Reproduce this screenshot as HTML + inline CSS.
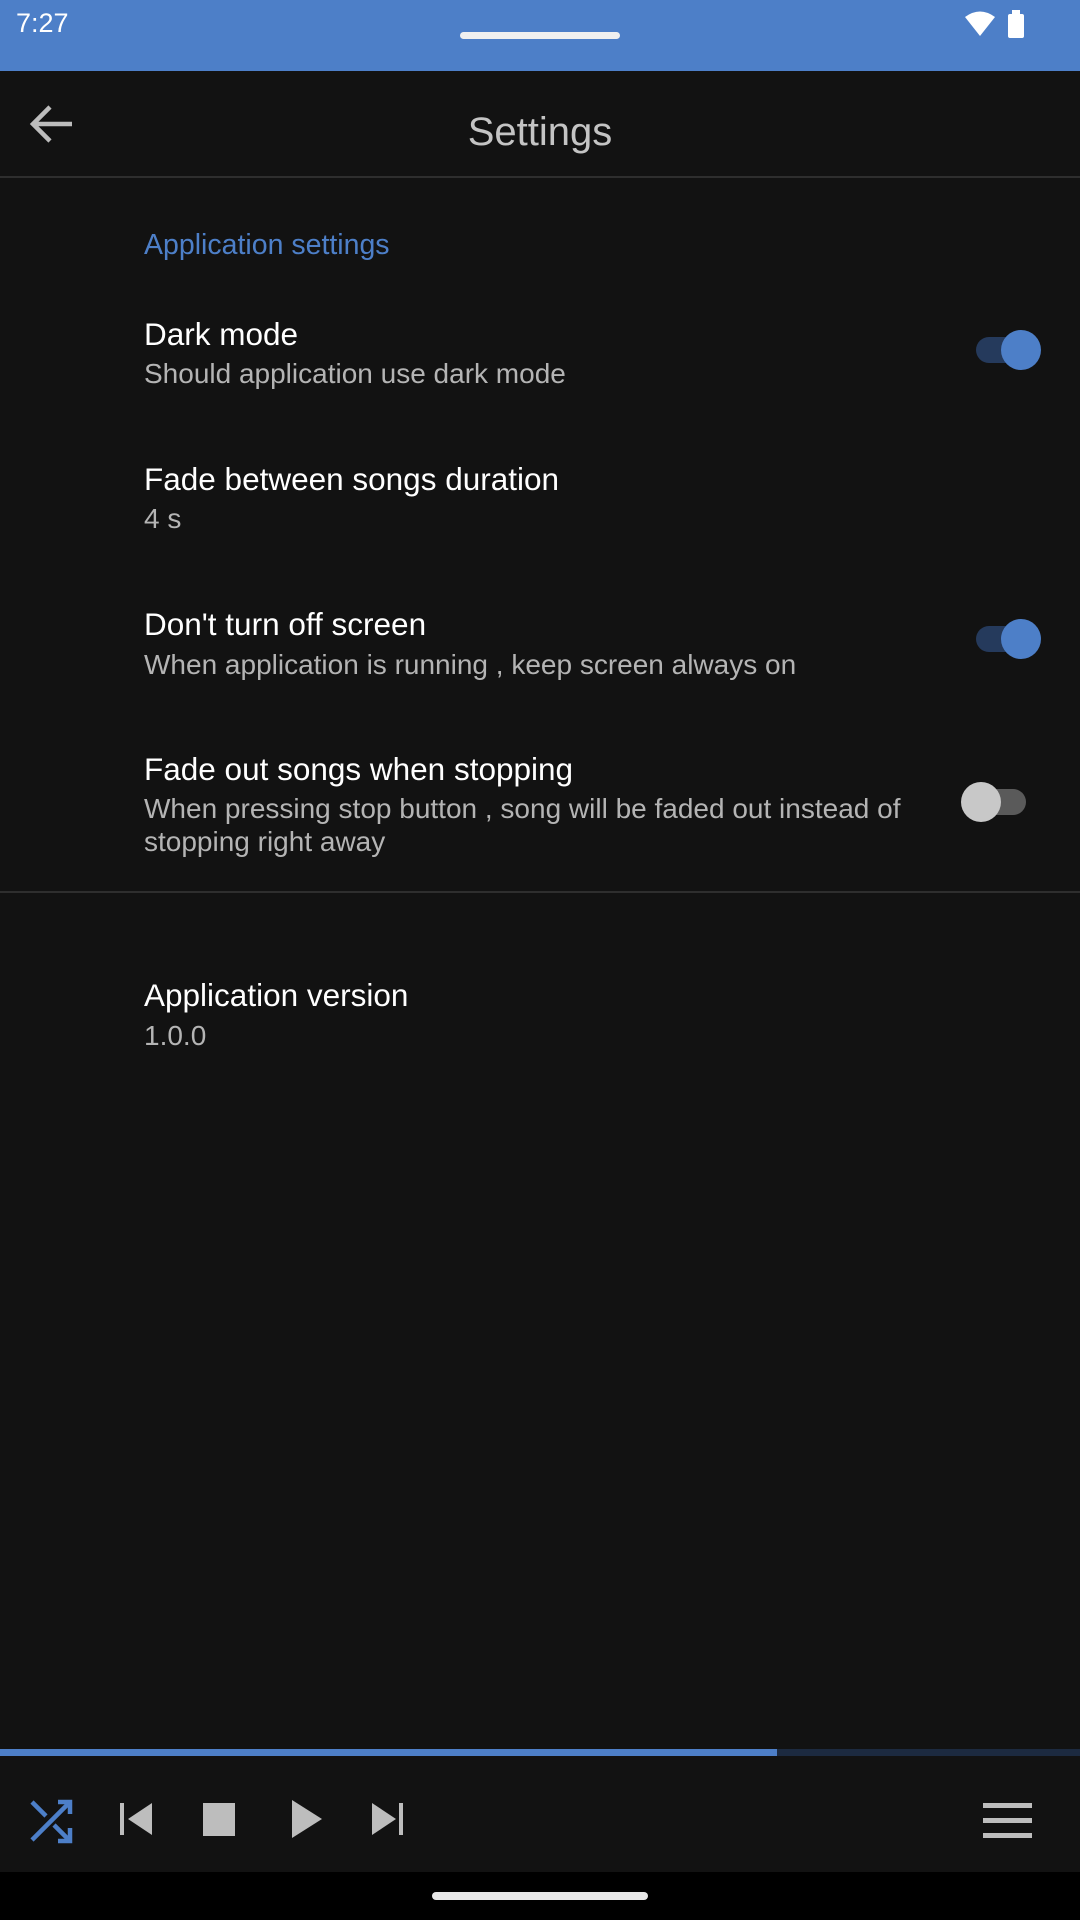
<!DOCTYPE html>
<html><head><meta charset="utf-8"><style>
*{margin:0;padding:0;box-sizing:border-box}
body{width:1080px;height:1920px;background:#121212;font-family:"Liberation Sans",sans-serif;position:relative;overflow:hidden}
.a{position:absolute;white-space:nowrap}
.t{color:#fff;font-size:31.5px;line-height:34px;left:144px}
.s{color:#b4b4b4;font-size:28px;line-height:32px;left:144px}
.track{position:absolute;width:64px;height:26px;border-radius:13px}
.thumb{position:absolute;width:40px;height:40px;border-radius:50%}
</style></head><body>
<div class="a" style="left:0;top:0;width:1080px;height:71px;background:#4d7fc8"></div>
<div class="a" style="left:16px;top:8px;color:#fff;font-size:27px;line-height:30px">7:27</div>
<div class="a" style="left:460px;top:32px;width:160px;height:7px;border-radius:4px;background:#f0f0f0"></div>
<svg class="a" style="left:964px;top:10px" width="32" height="28" viewBox="0 0 32 28"><path d="M16 26 L1 7 Q16 -4 31 7 Z" fill="#fff"/></svg>
<div class="a" style="left:1008px;top:14px;width:16px;height:24px;background:#fff;border-radius:2px"></div>
<div class="a" style="left:1012px;top:10px;width:8px;height:5px;background:#fff"></div>
<svg class="a" style="left:28px;top:102px" width="48" height="44" viewBox="0 0 48 44"><path d="M44 22 H6 M22 5 L5 22 L22 39" stroke="#bdbdbd" stroke-width="4.5" fill="none"/></svg>
<div class="a" style="left:0;width:1080px;text-align:center;top:112px;color:#c4c4c4;font-size:40px;line-height:40px">Settings</div>
<div class="a" style="left:0;top:176px;width:1080px;height:2px;background:#2e2e2e"></div>
<div class="a" style="left:144px;top:230px;color:#4d7fc8;font-size:28.5px;line-height:30px">Application settings</div>

<div class="a t" style="top:317px">Dark mode</div>
<div class="a s" style="top:358px">Should application use dark mode</div>
<div class="track" style="left:976px;top:337px;background:#253a5c"></div>
<div class="thumb" style="left:1001px;top:330px;background:#4d7fc8"></div>

<div class="a t" style="top:462px">Fade between songs duration</div>
<div class="a s" style="top:503px">4 s</div>

<div class="a t" style="top:607px">Don't turn off screen</div>
<div class="a s" style="top:649px">When application is running , keep screen always on</div>
<div class="track" style="left:976px;top:626px;background:#253a5c"></div>
<div class="thumb" style="left:1001px;top:619px;background:#4d7fc8"></div>

<div class="a t" style="top:752px">Fade out songs when stopping</div>
<div class="a s" style="top:793px">When pressing stop button , song will be faded out instead of</div>
<div class="a s" style="top:826px">stopping right away</div>
<div class="track" style="left:962px;top:789px;background:#5a5a5a"></div>
<div class="thumb" style="left:961px;top:782px;background:#c8c8c8"></div>

<div class="a" style="left:0;top:891px;width:1080px;height:2px;background:#2e2e2e"></div>
<div class="a t" style="top:978px">Application version</div>
<div class="a s" style="top:1020px">1.0.0</div>

<div class="a" style="left:0;top:1749px;width:1080px;height:7px;background:#1c2a40"></div>
<div class="a" style="left:0;top:1749px;width:777px;height:7px;background:#4d7fc8"></div>

<svg class="a" style="left:28px;top:1798px" width="48" height="46" viewBox="0 0 48 46"><g stroke="#4d7fc8" stroke-width="4.5" fill="none"><path d="M4 4 L18 18 M26 27 L42 43 M4 42 L42 4"/><path d="M30 4 H42 V16 M42 30 V43 H30"/></g></svg>
<svg class="a" style="left:118px;top:1801px" width="36" height="36" viewBox="0 0 36 36"><rect x="2" y="2" width="4" height="32" fill="#bdbdbd"/><path d="M34 2 V34 L10 18 Z" fill="#bdbdbd"/></svg>
<div class="a" style="left:203px;top:1803px;width:32px;height:33px;background:#bdbdbd"></div>
<svg class="a" style="left:290px;top:1798px" width="34" height="42" viewBox="0 0 34 42"><path d="M2 2 L32 21 L2 40 Z" fill="#bdbdbd"/></svg>
<svg class="a" style="left:370px;top:1801px" width="36" height="36" viewBox="0 0 36 36"><path d="M2 2 V34 L26 18 Z" fill="#bdbdbd"/><rect x="29" y="2" width="4" height="32" fill="#bdbdbd"/></svg>
<div class="a" style="left:983px;top:1803px;width:49px;height:5px;background:#bdbdbd"></div>
<div class="a" style="left:983px;top:1818px;width:49px;height:5px;background:#bdbdbd"></div>
<div class="a" style="left:983px;top:1833px;width:49px;height:5px;background:#bdbdbd"></div>

<div class="a" style="left:0;top:1872px;width:1080px;height:48px;background:#000"></div>
<div class="a" style="left:432px;top:1892px;width:216px;height:8px;border-radius:4px;background:#e8e8e8"></div>
</body></html>
